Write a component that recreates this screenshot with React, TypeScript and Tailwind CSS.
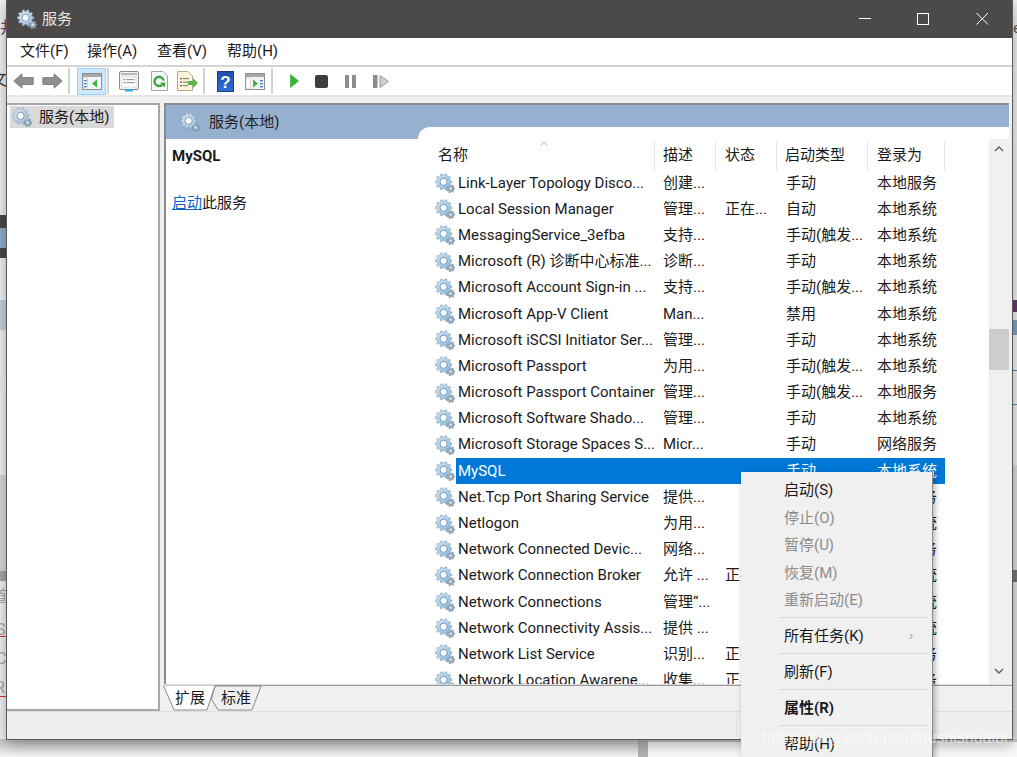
import React from "react";

function gearPath(cx: number, cy: number, r: number, teeth: number, depth: number) {
  const pts: string[] = [];
  const step = (Math.PI * 2) / teeth;
  for (let i = 0; i < teeth; i++) {
    const a = i * step;
    const seq: [number, number][] = [
      [a - step * 0.32, r - depth],
      [a - step * 0.18, r],
      [a + step * 0.18, r],
      [a + step * 0.32, r - depth],
    ];
    for (const [t, rr] of seq) pts.push(`${(cx + Math.cos(t) * rr).toFixed(2)},${(cy + Math.sin(t) * rr).toFixed(2)}`);
  }
  return "M" + pts.join("L") + "Z";
}
const bigGear = gearPath(8.6, 8.8, 8.2, 10, 1.7);
const smallGear = gearPath(15.6, 15.6, 4.2, 7, 1.1);

function Gear({ className = "", light = false }: { className?: string; light?: boolean }) {
  const id = light ? "gl" : "gd";
  return (
    <svg viewBox="0 0 20 20" className={className}>
      <defs>
        <linearGradient id={id} x1="0" y1="0" x2="1" y2="1">
          <stop offset="0" stopColor={light ? "#dfeaf4" : "#d5e7f4"} />
          <stop offset="1" stopColor={light ? "#9dbdd7" : "#86b6d8"} />
        </linearGradient>
      </defs>
      <path d={smallGear} fill="#93a8b8" stroke="#7c8f9f" strokeWidth="0.6" />
      <circle cx="15.6" cy="15.6" r="1.2" fill="#e8eef3" />
      <path d={bigGear} fill={`url(#${id})`} stroke="#7f9db6" strokeWidth="0.6" />
      <circle cx="8.6" cy="8.8" r="3.6" fill="#fbfdff" stroke="#6a93b5" strokeWidth="0.9" />
    </svg>
  );
}

function IconWindow({ arrow }: { arrow: "left" | "right" }) {
  return (
    <svg viewBox="0 0 20 17" className="w-5 h-[17px]">
      <rect x="0.5" y="0.5" width="19" height="16" fill="#f5f5f5" stroke="#8d8d8d" />
      <rect x="1" y="1" width="18" height="3" fill="#a8a8a8" />
      <rect x="1" y="5" width="4.5" height="11" fill="#fff" stroke="#b5b5b5" strokeWidth="0.5" />
      {arrow === "left" ? (
        <>
          <rect x="1.8" y="7" width="3" height="1.4" fill="#4a86c5" />
          <rect x="1.8" y="10" width="3" height="1.4" fill="#4a86c5" />
          <rect x="1.8" y="13" width="3" height="1.4" fill="#4a86c5" />
          <path d="M15 6.5v8l-5-4z" fill="#3eb13e" />
        </>
      ) : (
        <>
          <path d="M8 6.5v8l5-4z" fill="#3eb13e" />
          <rect x="15" y="7" width="3" height="1.4" fill="#4a86c5" />
          <rect x="15" y="10" width="3" height="1.4" fill="#4a86c5" />
          <rect x="15" y="13" width="3" height="1.4" fill="#4a86c5" />
        </>
      )}
    </svg>
  );
}

function Sep() {
  return <div className="w-[2px] h-[26px] bg-[#d2d2d2]" />;
}

const rows: [string, string, string, string, string][] = [
  ["Link-Layer Topology Disco...", "创建...", "", "手动", "本地服务"],
  ["Local Session Manager", "管理...", "正在...", "自动", "本地系统"],
  ["MessagingService_3efba", "支持...", "", "手动(触发...", "本地系统"],
  ["Microsoft (R) 诊断中心标准...", "诊断...", "", "手动", "本地系统"],
  ["Microsoft Account Sign-in ...", "支持...", "", "手动(触发...", "本地系统"],
  ["Microsoft App-V Client", "Man...", "", "禁用", "本地系统"],
  ["Microsoft iSCSI Initiator Ser...", "管理...", "", "手动", "本地系统"],
  ["Microsoft Passport", "为用...", "", "手动(触发...", "本地系统"],
  ["Microsoft Passport Container", "管理...", "", "手动(触发...", "本地服务"],
  ["Microsoft Software Shado...", "管理...", "", "手动", "本地系统"],
  ["Microsoft Storage Spaces S...", "Micr...", "", "手动", "网络服务"],
  ["MySQL", "", "", "手动", "本地系统"],
  ["Net.Tcp Port Sharing Service", "提供...", "", "手动", "本地服务"],
  ["Netlogon", "为用...", "", "手动", "本地系统"],
  ["Network Connected Devic...", "网络...", "", "手动", "本地服务"],
  ["Network Connection Broker", "允许 ...", "正在...", "手动", "本地系统"],
  ["Network Connections", "管理“...", "", "手动", "本地系统"],
  ["Network Connectivity Assis...", "提供 ...", "", "手动", "本地系统"],
  ["Network List Service", "识别...", "正在...", "手动", "本地服务"],
  ["Network Location Awarene...", "收集...", "正在...", "手动", "网络服务"],
];

function Row({ r }: { r: [string, string, string, string, string] }) {
  const selected = r[0] === "MySQL";
  return (
    <div className="flex h-[26.2px] shrink-0 items-center">
      <div className="w-[38px] pl-[17px] shrink-0">
        <Gear className="w-5 h-5" />
      </div>
      <div
        className={
          "grid grid-cols-[199px_61px_61px_91px_77px] h-full items-center whitespace-nowrap " +
          (selected ? "bg-[#0078d7] text-white" : "")
        }
      >
        <div className="pl-[2px]">{r[0]}</div>
        <div className="pl-[8px]">{r[1]}</div>
        <div className="pl-[9px]">{r[2]}</div>
        <div className="pl-[9px]">{r[3]}</div>
        <div className="pl-[9px]">{r[4]}</div>
      </div>
    </div>
  );
}

function MenuItem({ text, disabled, bold, arrow }: { text: string; disabled?: boolean; bold?: boolean; arrow?: boolean }) {
  return (
    <div
      className={
        "flex items-center justify-between h-[27.5px] pl-[43px] pr-[18px] " +
        (disabled ? "text-[#8c8c8c] " : "text-[#1a1a1a] ") +
        (bold ? "font-bold" : "")
      }
    >
      <span>{text}</span>
      {arrow && (
        <svg viewBox="0 0 6 8" className="w-[5px] h-[7px]">
          <path d="M1 1l3 3-3 3" fill="none" stroke="#777" strokeWidth="1" />
        </svg>
      )}
    </div>
  );
}

function MenuSep() {
  return <div className="ml-[38px] mr-[5px] h-[1px] bg-[#d9d9d9] mt-[2px] mb-[5.5px]" />;
}

export default function App() {
  return (
    <div className="relative w-[1017px] h-[757px] overflow-hidden bg-[#f3f3f3] font-['Roboto','Noto_Sans_CJK_SC',sans-serif] text-[15px] text-[#1a1a1a] leading-none">
      {/* desktop fragments behind the window */}
      <div className="absolute left-0 top-[739px] w-[1017px] h-[18px] bg-gradient-to-b from-[#c4c4c4] to-[#f6f6f6]" />
      <div className="absolute left-[638px] top-[739px] w-[10px] h-[18px] bg-[#b3b3b3]" />
      <div className="absolute left-[648px] top-[742px] w-[369px] h-[15px] bg-[#fafafa]" />
      <div className="absolute left-0 top-[20px] w-[6px] text-[#7b3a8c] text-[16px]">井</div>
      <div className="absolute left-[-9px] top-[72px] text-[16px] text-[#333]">文</div>
      <div className="absolute left-0 top-[215px] w-[6px] h-[43px] bg-[#4a4a4a]" />
      <div className="absolute left-0 top-[228px] w-[6px] h-[20px] bg-[#8eb0cf]" />
      <div className="absolute left-0 top-[300px] w-[6px] h-[30px] bg-[#c3d4e2]" />
      <div className="absolute left-[-8px] top-[380px] text-[16px] text-[#222]">扌</div>
      <div className="absolute left-0 top-[475px] w-[6px] h-[96px] bg-[#dadada]" />
      <div className="absolute left-0 top-[571px] w-[6px] h-[10px] bg-[#a8a8a8]" />
      <div className="absolute left-[-9px] top-[589px] text-[16px] text-[#aaa]">道</div>
      <div className="absolute left-[-4px] top-[622px] text-[16px] text-[#aaa]">S</div>
      <div className="absolute left-[-4px] top-[651px] text-[16px] text-[#aaa]">C</div>
      <div className="absolute left-[-5px] top-[680px] text-[16px] text-[#aaa]">R</div>
      <div className="absolute left-0 top-[636px] w-[6px] h-[1px] bg-[#e23030]" />
      <div className="absolute left-0 top-[696px] w-[6px] h-[1px] bg-[#e23030]" />
      <div className="absolute left-[1013px] top-[21px] text-[15px] text-[#555]">e</div>
      <div className="absolute left-[1012px] top-[300px] w-[5px] h-[12px] bg-[#6b3a6e]" />
      <div className="absolute left-[1012px] top-[320px] w-[5px] h-[15px] bg-[#7fa4c4]" />
      <div className="absolute left-[1012px] top-[370px] w-[5px] h-[1px] bg-[#4a90d0]" />
      <div className="absolute left-[1012px] top-[404px] w-[5px] h-[1px] bg-[#4a90d0]" />
      <div className="absolute left-[1012px] top-[465px] w-[5px] h-[105px] bg-[#dcdcdc]" />
      <div className="absolute left-[1012px] top-[570px] w-[5px] h-[12px] bg-[#777]" />
      <div className="absolute left-[1012px] top-[582px] w-[5px] h-[157px] bg-[#e2e2e2]" />

      {/* window */}
      <div className="absolute left-[6px] top-0 w-[1007px] h-[740px] flex flex-col border-x border-b border-[#5a5a5a] bg-[#f0f0f0] shadow-[0_4px_14px_rgba(0,0,0,0.35)]">
        <div className="h-[38px] shrink-0 bg-[#4b4a48] flex items-center pl-[10px] text-[#e6e6e6]">
          <Gear className="w-5 h-5" light />
          <span className="ml-[5px] text-[15px]">服务</span>
          <div className="ml-auto flex items-center">
            <svg viewBox="0 0 58 38" className="w-[58px] h-[38px]">
              <path d="M0 18.5h12" stroke="#fff" strokeWidth="1" />
            </svg>
            <svg viewBox="0 0 59 38" className="w-[59px] h-[38px]">
              <rect x="0.5" y="13.5" width="11" height="11" fill="none" stroke="#fff" strokeWidth="1" />
            </svg>
            <svg viewBox="0 0 36 38" className="w-9 h-[38px]">
              <path d="M0.5 13l11.5 11.5M12 13L0.5 24.5" stroke="#fff" strokeWidth="1" />
            </svg>
          </div>
        </div>

        <div className="h-[27px] shrink-0 bg-white flex items-center pl-[13px] text-[#1a1a1a]">
          <span className="w-[67px]">文件(F)</span>
          <span className="w-[70px]">操作(A)</span>
          <span className="w-[70px]">查看(V)</span>
          <span>帮助(H)</span>
        </div>
        <div className="h-[2px] shrink-0 bg-[#d4d4d4]" />

        <div className="h-[28px] shrink-0 bg-white flex items-center pl-[6px]">
          <svg viewBox="0 0 21 16" className="w-[21px] h-4">
            <path d="M0.8 8L9 0.8V4.5H20.2V11.5H9V15.2z" fill="#8f8f8f" stroke="#737373" strokeWidth="0.8" />
          </svg>
          <svg viewBox="0 0 21 16" className="w-[21px] h-4 ml-[8px]">
            <path d="M20.2 8L12 0.8V4.5H0.8V11.5H12V15.2z" fill="#8f8f8f" stroke="#737373" strokeWidth="0.8" />
          </svg>
          <div className="ml-[5px]"><Sep /></div>
          <div className="ml-[7px] w-[29px] h-[27px] bg-[#cce8ff] border border-[#99d1ff] flex items-center justify-center">
            <IconWindow arrow="left" />
          </div>
          <div className="ml-[1px]"><Sep /></div>
          <svg viewBox="0 0 20 21" className="w-5 h-[21px] ml-[10px]">
            <rect x="0.5" y="0.5" width="19" height="18" rx="1.5" fill="#f4f4f4" stroke="#8a8a8a" />
            <rect x="2" y="2" width="16" height="2" fill="#b8b8b8" />
            <rect x="3" y="6" width="14" height="10" fill="#fff" stroke="#c4c4c4" strokeWidth="0.5" />
            <rect x="4.5" y="8" width="2" height="1.2" fill="#4a9bd8" />
            <rect x="7.5" y="8" width="8" height="1.2" fill="#9a9a9a" />
            <rect x="4.5" y="11" width="2" height="1.2" fill="#4a9bd8" />
            <rect x="7.5" y="11" width="8" height="1.2" fill="#9a9a9a" />
            <rect x="6" y="18" width="8" height="2.5" fill="#3ca5dc" />
          </svg>
          <svg viewBox="0 0 17 20" className="w-[17px] h-5 ml-[12px]">
            <path d="M0.5 0.5H12L16.5 5V19.5H0.5z" fill="#f8f8f8" stroke="#a3a3a3" />
            <path d="M12.6 9.6A4.6 4.6 0 1 0 11 14" fill="none" stroke="#3aa63a" strokeWidth="2.4" />
            <path d="M9 11.5l5.5 0-1 5z" fill="#3aa63a" />
          </svg>
          <svg viewBox="0 0 21 20" className="w-[21px] h-5 ml-[9px]">
            <path d="M0.5 0.5H11L15.5 5V19.5H0.5z" fill="#fbf4d9" stroke="#b3ab90" />
            <rect x="3" y="7" width="2" height="1.2" fill="#555" />
            <rect x="6" y="7" width="6" height="1.2" fill="#888" />
            <rect x="3" y="10.5" width="2" height="1.2" fill="#555" />
            <rect x="6" y="10.5" width="5" height="1.2" fill="#888" />
            <rect x="3" y="14" width="2" height="1.2" fill="#555" />
            <rect x="6" y="14" width="5" height="1.2" fill="#888" />
            <path d="M11 10h5V7l5 5-5 5v-3h-5z" fill="#56b848" />
          </svg>
          <div className="ml-[5px]"><Sep /></div>
          <svg viewBox="0 0 17 21" className="w-[17px] h-[21px] ml-[12px]">
            <defs>
              <linearGradient id="hb" x1="0" y1="0" x2="0" y2="1">
                <stop offset="0" stopColor="#1f4ea8" />
                <stop offset="1" stopColor="#2f6fd6" />
              </linearGradient>
            </defs>
            <rect x="0.5" y="0.5" width="16" height="20" fill="url(#hb)" stroke="#1c3f86" />
            <text x="8.5" y="16.5" textAnchor="middle" fontSize="17" fontWeight="700" fill="#fff" fontFamily="Liberation Sans, sans-serif">?</text>
          </svg>
          <div className="ml-[11px]"><IconWindow arrow="right" /></div>
          <div className="ml-[6px]"><Sep /></div>
          <svg viewBox="0 0 9 14" className="w-[9px] h-[14px] ml-[17px]">
            <path d="M0.5 0.5L8.5 7L0.5 13.5z" fill="#35b435" stroke="#2e9a2e" strokeWidth="0.6" />
          </svg>
          <div className="w-[13px] h-[13px] ml-[16px] rounded-[2px] bg-[#3e3e3e]" />
          <svg viewBox="0 0 11 13" className="w-[11px] h-[13px] ml-[17px]">
            <rect x="0" y="0" width="4" height="13" fill="#8c8c8c" />
            <rect x="7" y="0" width="4" height="13" fill="#8c8c8c" />
          </svg>
          <svg viewBox="0 0 16 13" className="w-4 h-[13px] ml-[17px]">
            <rect x="0" y="0" width="4.5" height="13" fill="#8c8c8c" />
            <path d="M7 0.5L15.5 6.5L7 12.5z" fill="#d0d0d0" stroke="#9a9a9a" />
          </svg>
        </div>

        <div className="flex-1 min-h-0 flex pt-[6px] bg-[#f0f0f0] border-t-2 border-[#e6e6e6]">
          <div className="w-[153px] shrink-0 bg-white border-r-2 border-b-2 border-t-2 border-[#a6a6a6] pt-px pl-[3px]">
            <div className="inline-flex items-center h-[22px] pl-[2px] pr-[5px] bg-[#d9d9d9]">
              <Gear className="w-5 h-5" light />
              <span className="ml-[7px]">服务(本地)</span>
            </div>
          </div>

          <div className="ml-[4px] flex-1 min-w-0 flex flex-col">
            <div className="flex-1 min-h-0 flex flex-col border-l-2 border-t-2 border-[#8c8c8c] mr-[3px] bg-white">
              <div className="h-[34px] shrink-0 bg-[#96b1d0] flex items-center pl-[14px] text-[#222]">
                <Gear className="w-5 h-5" light />
                <span className="ml-[9px]">服务(本地)</span>
              </div>
              <div className="flex-1 min-h-0 flex">
                <div className="w-[252px] shrink-0 pl-[6px] pt-[10px]">
                  <div className="font-bold text-[15px] leading-[15px]">MySQL</div>
                  <div className="mt-[32px]">
                    <span className="text-[#0a63c9] underline">启动</span>此服务
                  </div>
                </div>
                <div className="flex-1 min-w-0 -mt-[12px] bg-white rounded-tl-[12px] flex relative overflow-hidden">
                  <div className="flex-1 min-w-0 flex flex-col overflow-hidden">
                    <div className="mt-[14px] h-[29px] shrink-0 grid grid-cols-[237px_61px_61px_91px_77px] relative">
                      <div className="pl-[20px] flex items-center border-r border-[#e5e5e5]">名称</div>
                      <div className="pl-[8px] flex items-center border-r border-[#e5e5e5]">描述</div>
                      <div className="pl-[9px] flex items-center border-r border-[#e5e5e5]">状态</div>
                      <div className="pl-[8px] flex items-center border-r border-[#e5e5e5]">启动类型</div>
                      <div className="pl-[9px] flex items-center border-r border-[#e5e5e5]">登录为</div>
                      <svg viewBox="0 0 8 5" className="absolute left-[122px] top-0 w-2 h-[5px]">
                        <path d="M1 4l3-3 3 3" fill="none" stroke="#b0b0b0" strokeWidth="1" />
                      </svg>
                    </div>
                    {rows.map((r) => (
                      <Row key={r[0]} r={r} />
                    ))}
                  </div>
                  <div className="w-[20px] shrink-0 mt-[12px] bg-[#f0f0f0] flex flex-col items-center">
                    <svg viewBox="0 0 10 6" className="w-[10px] h-[6px] mt-[7px]">
                      <path d="M1 5l4-4 4 4" fill="none" stroke="#5f5f5f" strokeWidth="1.4" />
                    </svg>
                    <div className="w-[20px] h-[41px] mt-[177px] bg-[#cdcdcd]" />
                    <svg viewBox="0 0 10 6" className="w-[10px] h-[6px] mt-auto mb-[10px]">
                      <path d="M1 1l4 4 4-4" fill="none" stroke="#5f5f5f" strokeWidth="1.4" />
                    </svg>
                  </div>
                </div>
              </div>
            </div>
            <div className="h-[2px] shrink-0 bg-[#dcdcdc]" />
            <div className="h-[26px] shrink-0 relative flex items-center border-t border-[#9a9a9a] bg-[#f0f0f0] -mt-[1px]">
              <svg viewBox="0 0 100 26" className="absolute left-[-1px] top-[-1px] w-[100px] h-[26px]">
                <path d="M0.5 0.5L11 25H44L52 0.5" fill="#fff" stroke="#8a8a8a" />
                <path d="M52 1H98L89 25H55L48.5 14z" fill="#efefef" stroke="#8a8a8a" />
              </svg>
              <span className="relative ml-[11px]">扩展</span>
              <span className="relative ml-[16px]">标准</span>
            </div>
          </div>
        </div>

        <div className="h-[28px] shrink-0 border-t border-[#dedede] bg-[#efefef] flex">
          <div className="w-[730px] border-r border-[#e0e0e0] my-[2px]" />
        </div>
      </div>

      {/* context menu */}
      <div className="absolute left-[741px] top-[472px] w-[192px] h-[300px] bg-[#f0f0f0] border-r border-[#8c8c8c] shadow-[2px_2px_6px_rgba(0,0,0,0.3)] pt-[5px] text-[15px]">
        <MenuItem text="启动(S)" />
        <MenuItem text="停止(O)" disabled />
        <MenuItem text="暂停(U)" disabled />
        <MenuItem text="恢复(M)" disabled />
        <MenuItem text="重新启动(E)" disabled />
        <MenuSep />
        <MenuItem text="所有任务(K)" arrow />
        <MenuSep />
        <MenuItem text="刷新(F)" />
        <MenuSep />
        <MenuItem text="属性(R)" bold />
        <MenuSep />
        <MenuItem text="帮助(H)" />
      </div>

      <div className="absolute left-[762px] top-[730px] text-[16px] leading-[16px] text-white/60 font-['Liberation_Sans',sans-serif] whitespace-nowrap">
        https://blog.csdn.net/doushishuaibi
      </div>
    </div>
  );
}
